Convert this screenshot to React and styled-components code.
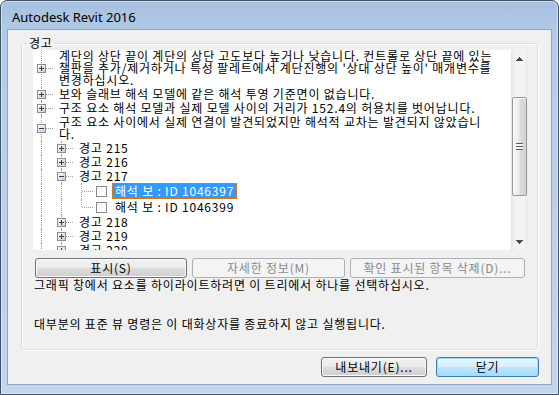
import React from 'react';
import styled, { createGlobalStyle } from 'styled-components';

const GlobalStyle = createGlobalStyle`
  html, body { margin: 0; padding: 0; background: #fff; }
  body { font-family: "Noto Sans CJK KR", "Noto Sans", sans-serif; }
`;

const KO = `"Noto Sans CJK KR", "Noto Sans", sans-serif`;

const Window = styled.div`
  width: 559px;
  height: 395px;
  box-sizing: border-box;
  display: flex;
  flex-direction: column;
  border: 1px solid #3e5064;
  border-radius: 7px 7px 0 0;
  background: linear-gradient(180deg, #a6c1e0 0px, #b4cce7 40px, #c2d6ed 100%);
  box-shadow: inset 0 0 0 1px rgba(255, 255, 255, 0.45);
  padding: 0 7px 10px 7px;
  overflow: hidden;
`;

const TitleBar = styled.div`
  height: 29px;
  flex: 0 0 29px;
  box-sizing: border-box;
  display: flex;
  align-items: center;
  padding: 3px 0 0 4px;
  font-family: "Noto Sans", "Liberation Sans", sans-serif;
  font-size: 13px;
  color: #000;
`;

const Client = styled.div`
  flex: 1;
  background: #f0f0f0;
  box-shadow: 0 0 0 1px #8fa6bf;
  padding: 6px 13px 6px 13px;
  display: flex;
  flex-direction: column;
  font-family: ${KO};
  font-size: 12px;
  letter-spacing: 0.8px;
  color: #000;
`;

const Group = styled.fieldset`
  margin: 0;
  min-width: 0;
  padding: 0 9px 18px 11px;
  border: 1px solid #d5dfe5;
  border-radius: 3px;
  box-shadow: inset 1px 1px 0 #fff, 1px 1px 0 #fff;
`;

const Legend = styled.legend`
  margin-left: -6px;
  padding: 0 2px;
  line-height: 14px;
  height: 14px;
  font-size: 12px;
`;

const TreeFrame = styled.div`
  display: flex;
  height: 200px;
`;

const TreeView = styled.div`
  flex: 1;
  background: #fff;
  overflow: hidden;
`;

const TreeList = styled.div`
  margin-top: -1px;
`;

const Row = styled.div`
  display: flex;
  align-items: stretch;
`;

const Cell = styled.span`
  position: relative;
  flex: 0 0 20px;
  display: flex;
  align-items: center;

  &::before {
    content: '';
    display: ${p => (p.$line ? 'block' : 'none')};
    position: absolute;
    left: 8px;
    top: 0;
    bottom: ${p => (p.$half ? '50%' : '0')};
    border-left: 1px dotted #a0a0a0;
  }
  &::after {
    content: '';
    display: ${p => (p.$branch ? 'block' : 'none')};
    position: absolute;
    left: 9px;
    right: 0;
    top: 50%;
    border-top: 1px dotted #a0a0a0;
  }

  svg {
    position: relative;
    z-index: 1;
    margin-left: 4px;
    display: block;
  }
`;

const Label = styled.div`
  margin-left: 6px;
  padding: 1px 0;
  line-height: 12px;
  white-space: nowrap;
`;

const CheckSlot = styled.span`
  display: flex;
  align-items: center;
  margin-left: 3px;
`;

const Check = styled.span`
  width: 9px;
  height: 9px;
  border: 1px solid #8a8a8a;
  background: linear-gradient(135deg, #f4f4f4, #fff);
`;

const CheckLabel = styled.div`
  margin-left: 5px;
  padding: 2px 3px;
  line-height: 12px;
  white-space: nowrap;
  background: ${p => (p.$selected ? '#3399ff' : 'transparent')};
  color: ${p => (p.$selected ? '#fff' : '#000')};
  outline: ${p => (p.$selected ? '1px dotted #d97a1c' : 'none')};
  outline-offset: -1px;
`;

const ScrollBar = styled.div`
  flex: 0 0 17px;
  display: flex;
  flex-direction: column;
  background: linear-gradient(90deg, #e6e6e6 0px, #f3f3f3 4px, #f3f3f3 13px, #ebebeb 17px);
`;

const Arrow = styled.div`
  height: 17px;
  flex: 0 0 17px;
  display: flex;
  align-items: center;
  justify-content: center;
`;

const Track = styled.div`
  flex: 1;
  padding: 0 1px;
`;

const Thumb = styled.div`
  box-sizing: border-box;
  border: 1px solid #979797;
  border-radius: 2px;
  background: linear-gradient(90deg, #f6f6f6 0%, #ececec 45%, #dcdcdc 55%, #d2d2d2 100%);
  box-shadow: inset 1px 1px 0 #fff;
  display: flex;
  align-items: center;
  justify-content: center;
`;

const Grip = styled.span`
  width: 7px;
  height: 7px;
  background: repeating-linear-gradient(180deg, #5e5e5e 0px, #5e5e5e 1px, #f4f4f4 1px, #f4f4f4 3px);
`;

const ButtonRow = styled.div`
  display: grid;
  grid-template-columns: 152px 153px 175px;
  column-gap: 5px;
  margin-top: 8px;
  padding-left: 2px;
`;

const Button = styled.button`
  box-sizing: border-box;
  height: 20px;
  width: ${p => (p.$w ? `${p.$w}px` : 'auto')};
  padding: 0;
  font-family: ${KO};
  font-size: 12px;
  letter-spacing: inherit;
  line-height: 16px;
  color: ${p => (p.disabled ? '#8a8a8a' : '#000')};
  border-radius: 3px;
  border: 1px solid ${p => (p.disabled ? '#adb2b5' : p.$primary ? '#3c7fb1' : '#707070')};
  background: ${p =>
    p.disabled
      ? '#f4f4f4'
      : p.$primary
      ? 'linear-gradient(180deg, #eaf6fd 0%, #d9f0fc 50%, #bee6fd 51%, #a7d9f5 100%)'
      : 'linear-gradient(180deg, #f2f2f2 0%, #ebebeb 50%, #dddddd 51%, #cfcfcf 100%)'};
  box-shadow: inset 0 0 0 1px ${p => (p.disabled ? '#f4f4f4' : p.$primary ? '#9fdcff' : '#fcfcfc')};
`;

const Hint = styled.div`
  line-height: 14px;
  margin-top: ${p => (p.$gap ? `${p.$gap}px` : '0')};
  padding-left: 1px;
  white-space: nowrap;
`;

const Footer = styled.div`
  display: flex;
  justify-content: flex-end;
  gap: 9px;
  margin-top: 7px;
  margin-right: -1px;
`;

const Expander = ({ open }) => (
  <svg width="9" height="9" viewBox="0 0 9 9" shapeRendering="crispEdges">
    <defs>
      <linearGradient id="exp" x1="0" y1="0" x2="1" y2="1">
        <stop offset="0" stopColor="#ffffff" />
        <stop offset="1" stopColor="#c9c9c9" />
      </linearGradient>
    </defs>
    <rect x="0.5" y="0.5" width="8" height="8" fill="url(#exp)" stroke="#8e8e8e" />
    <path d="M2 4.5h5" stroke="#1e3c82" />
    {!open && <path d="M4.5 2v5" stroke="#1e3c82" />}
  </svg>
);

const Tri = ({ down }) => (
  <svg width="7" height="4" viewBox="0 0 7 4" shapeRendering="crispEdges">
    <path d={down ? 'M0 0h7L3.5 4z' : 'M0 4h7L3.5 0z'} fill="#4a4a4a" />
  </svg>
);

const rows = [
  {
    level: 0,
    toggle: 'plus',
    lines: [
      '계단의 상단 끝이 계단의 상단 고도보다 높거나 낮습니다. 컨트롤로 상단 끝에 있는',
      "챌판을 추가/제거하거나 특성 팔레트에서 계단진행의 '상대 상단 높이' 매개변수를",
      '변경하십시오.',
    ],
  },
  { level: 0, toggle: 'plus', lines: ['보와 슬래브 해석 모델에 같은 해석 투영 기준면이 없습니다.'] },
  { level: 0, toggle: 'plus', lines: ['구조 요소 해석 모델과 실제 모델 사이의 거리가 152.4의 허용치를 벗어납니다.'] },
  {
    level: 0,
    toggle: 'minus',
    lines: ['구조 요소 사이에서 실제 연결이 발견되었지만 해석적 교차는 발견되지 않았습니', '다.'],
  },
  { level: 1, toggle: 'plus', lines: ['경고 215'] },
  { level: 1, toggle: 'plus', lines: ['경고 216'] },
  { level: 1, toggle: 'minus', lines: ['경고 217'] },
  { level: 2, check: true, selected: true, lines: ['해석 보 : ID 1046397'] },
  { level: 2, check: true, last: true, lines: ['해석 보 : ID 1046399'] },
  { level: 1, toggle: 'plus', lines: ['경고 218'] },
  { level: 1, toggle: 'plus', lines: ['경고 219'] },
  { level: 1, toggle: 'plus', lines: ['경고 220'] },
];

const TreeRow = ({ row }) => {
  const guides = [];
  for (let i = 0; i < row.level; i++) guides.push(<Cell key={i} $line />);
  return (
    <Row>
      {guides}
      <Cell $line $half={row.last} $branch>
        {row.toggle && <Expander open={row.toggle === 'minus'} />}
      </Cell>
      {row.check ? (
        <>
          <CheckSlot>
            <Check />
          </CheckSlot>
          <CheckLabel $selected={row.selected}>{row.lines[0]}</CheckLabel>
        </>
      ) : (
        <Label>
          {row.lines.map((l, i) => (
            <div key={i}>{l}</div>
          ))}
        </Label>
      )}
    </Row>
  );
};

export default function App() {
  return (
    <>
      <GlobalStyle />
      <Window>
        <TitleBar>Autodesk Revit 2016</TitleBar>
        <Client>
          <Group>
            <Legend>경고</Legend>
            <TreeFrame>
              <TreeView>
                <TreeList>
                  {rows.map((r, i) => (
                    <TreeRow key={i} row={r} />
                  ))}
                </TreeList>
              </TreeView>
              <ScrollBar>
                <Arrow>
                  <Tri />
                </Arrow>
                <Track>
                  <Thumb style={{ marginTop: 30, height: 99 }}>
                    <Grip />
                  </Thumb>
                </Track>
                <Arrow>
                  <Tri down />
                </Arrow>
              </ScrollBar>
            </TreeFrame>
            <ButtonRow>
              <Button>표시(S)</Button>
              <Button disabled>자세한 정보(M)</Button>
              <Button disabled>확인 표시된 항목 삭제(D)...</Button>
            </ButtonRow>
            <Hint>그래픽 창에서 요소를 하이라이트하려면 이 트리에서 하나를 선택하십시오.</Hint>
            <Hint $gap={25}>대부분의 표준 뷰 명령은 이 대화상자를 종료하지 않고 실행됩니다.</Hint>
          </Group>
          <Footer>
            <Button $w={106}>내보내기(E)...</Button>
            <Button $w={103} $primary>
              닫기
            </Button>
          </Footer>
        </Client>
      </Window>
    </>
  );
}
